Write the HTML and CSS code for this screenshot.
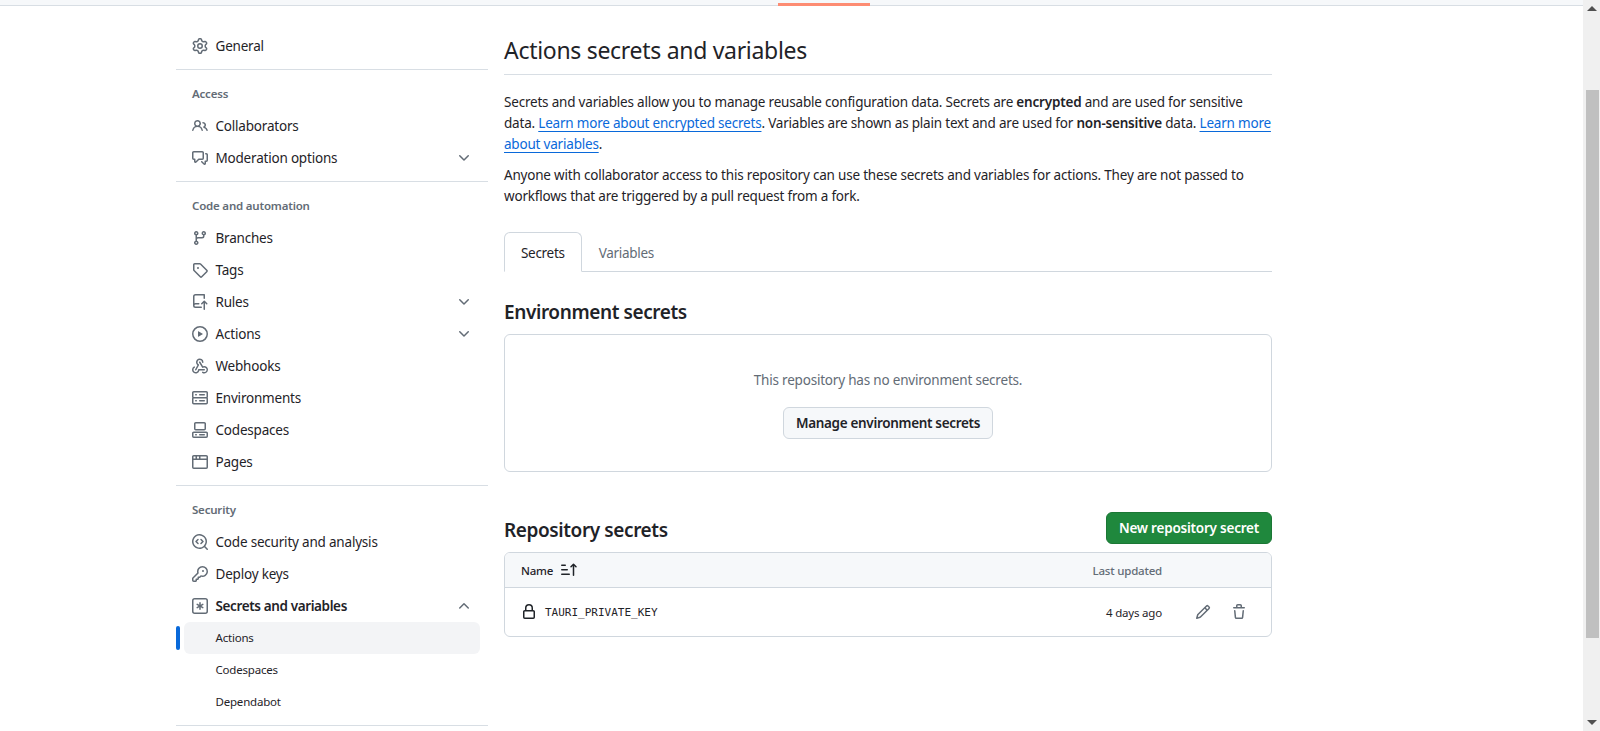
FILE: index.html
```html
<!DOCTYPE html>
<html lang="en">
<head>
<meta charset="utf-8">
<title>Actions secrets and variables</title>
<link rel="stylesheet" href="styles.css">
</head>
<body>
<div class="window">
  <div class="page">
    <div class="topbar"><span class="progress"></span></div>
    <div class="layout">
      <nav class="sidebar">
        <a class="item"><svg class="ic" viewBox="0 0 16 16"><path d="M8 0a8.2 8.2 0 0 1 .701.031C9.444.095 9.99.645 10.16 1.29l.288 1.107c.018.066.079.158.212.224.231.114.454.243.668.386.123.082.233.09.299.071l1.103-.303c.644-.176 1.392.021 1.82.63.27.385.506.792.704 1.218.315.675.111 1.422-.364 1.891l-.814.806c-.049.048-.098.147-.088.294.016.257.016.515 0 .772-.01.147.038.246.088.294l.814.806c.475.469.679 1.216.364 1.891a7.977 7.977 0 0 1-.704 1.217c-.428.61-1.176.807-1.82.63l-1.102-.302c-.067-.019-.177-.011-.3.071a5.909 5.909 0 0 1-.668.386c-.133.066-.194.158-.211.224l-.29 1.106c-.168.646-.715 1.196-1.458 1.26a8.006 8.006 0 0 1-1.402 0c-.743-.064-1.289-.614-1.458-1.26l-.289-1.106c-.018-.066-.079-.158-.212-.224a5.738 5.738 0 0 1-.668-.386c-.123-.082-.233-.09-.299-.071l-1.103.303c-.644.176-1.392-.021-1.82-.63a8.12 8.12 0 0 1-.704-1.218c-.315-.675-.111-1.422.363-1.891l.815-.806c.05-.048.098-.147.088-.294a6.214 6.214 0 0 1 0-.772c.01-.147-.038-.246-.088-.294l-.815-.806C.635 6.045.431 5.298.746 4.623a7.92 7.92 0 0 1 .704-1.217c.428-.61 1.176-.807 1.82-.63l1.102.302c.067.019.177.011.3-.071.214-.143.437-.272.668-.386.133-.066.194-.158.211-.224l.29-1.106C6.009.645 6.556.095 7.299.03 7.53.01 7.764 0 8 0Zm-.571 1.525c-.036.003-.108.036-.137.146l-.289 1.105c-.147.561-.549.967-.998 1.189-.173.086-.34.183-.5.29-.417.278-.97.423-1.529.27l-1.103-.303c-.109-.03-.175.016-.195.045-.22.312-.412.644-.573.99-.014.031-.021.11.059.19l.815.806c.411.406.562.957.53 1.456a4.709 4.709 0 0 0 0 .582c.032.499-.119 1.05-.53 1.456l-.815.806c-.081.08-.073.159-.059.19.162.346.353.677.573.989.02.03.085.076.195.046l1.102-.303c.56-.153 1.113-.008 1.53.27.161.107.328.204.501.29.447.222.85.629.997 1.189l.289 1.105c.029.109.101.143.137.146a6.6 6.6 0 0 0 1.142 0c.036-.003.108-.036.137-.146l.289-1.105c.147-.561.549-.967.998-1.189.173-.086.34-.183.5-.29.417-.278.97-.423 1.529-.27l1.103.303c.109.029.175-.016.195-.045.22-.313.411-.644.573-.99.014-.031.021-.11-.059-.19l-.815-.806c-.411-.406-.562-.957-.53-1.456a4.709 4.709 0 0 0 0-.582c-.032-.499.119-1.05.53-1.456l.815-.806c.081-.08.073-.159.059-.19a6.464 6.464 0 0 0-.573-.989c-.02-.03-.085-.076-.195-.046l-1.102.303c-.56.153-1.113.008-1.53-.27a4.44 4.44 0 0 0-.501-.29c-.447-.222-.85-.629-.997-1.189l-.289-1.105c-.029-.11-.101-.143-.137-.146a6.6 6.6 0 0 0-1.142 0ZM11 8a3 3 0 1 1-6 0 3 3 0 0 1 6 0ZM9.5 8a1.5 1.5 0 1 0-3.001.001A1.5 1.5 0 0 0 9.5 8Z"/></svg>General</a>

        <div class="group">
          <h3 class="group-title">Access</h3>
          <a class="item"><svg class="ic" viewBox="0 0 16 16"><path d="M2 5.5a3.5 3.5 0 1 1 5.898 2.549 5.508 5.508 0 0 1 3.034 4.084.75.75 0 1 1-1.482.235 4 4 0 0 0-7.9 0 .75.75 0 0 1-1.482-.236A5.507 5.507 0 0 1 3.102 8.05 3.493 3.493 0 0 1 2 5.5ZM11 4a3.001 3.001 0 0 1 2.22 5.018 5.01 5.01 0 0 1 2.56 3.012.749.749 0 0 1-.885.954.752.752 0 0 1-.549-.514 3.507 3.507 0 0 0-2.522-2.372.75.75 0 0 1-.574-.73v-.352a.75.75 0 0 1 .416-.672A1.5 1.5 0 0 0 11 5.5.75.75 0 0 1 11 4Zm-5.5-.5a2 2 0 1 0-.001 3.999A2 2 0 0 0 5.5 3.5Z"/></svg>Collaborators</a>
          <a class="item"><svg class="ic" viewBox="0 0 16 16"><path d="M1.75 1h8.5c.966 0 1.75.784 1.75 1.75v5.5A1.75 1.75 0 0 1 10.25 10H7.061l-2.574 2.573A1.458 1.458 0 0 1 2 11.543V10h-.25A1.75 1.75 0 0 1 0 8.25v-5.5C0 1.784.784 1 1.75 1ZM1.5 2.75v5.5c0 .138.112.25.25.25h1a.75.75 0 0 1 .75.75v2.19l2.72-2.72a.749.749 0 0 1 .53-.22h3.5a.25.25 0 0 0 .25-.25v-5.5a.25.25 0 0 0-.25-.25h-8.5a.25.25 0 0 0-.25.25Zm13 2a.25.25 0 0 0-.25-.25h-.5a.75.75 0 0 1 0-1.5h.5c.966 0 1.75.784 1.75 1.75v5.5A1.75 1.75 0 0 1 14.25 12H14v1.543a1.458 1.458 0 0 1-2.487 1.03L9.22 12.28a.749.749 0 0 1 .326-1.275.749.749 0 0 1 .734.215l2.22 2.22v-2.19a.75.75 0 0 1 .75-.75h1a.25.25 0 0 0 .25-.25Z"/></svg>Moderation options<svg class="chev" viewBox="0 0 16 16"><path d="M12.78 5.22a.749.749 0 0 1 0 1.06l-4.25 4.25a.749.749 0 0 1-1.06 0L3.22 6.28a.749.749 0 1 1 1.06-1.06L8 8.939l3.72-3.719a.749.749 0 0 1 1.06 0Z"/></svg></a>
        </div>

        <div class="group">
          <h3 class="group-title">Code and automation</h3>
          <a class="item"><svg class="ic" viewBox="0 0 16 16"><path d="M9.5 3.25a2.25 2.25 0 1 1 3 2.122V6A2.5 2.5 0 0 1 10 8.5H6a1 1 0 0 0-1 1v1.128a2.251 2.251 0 1 1-1.5 0V5.372a2.25 2.25 0 1 1 1.5 0v1.836A2.493 2.493 0 0 1 6 7h4a1 1 0 0 0 1-1v-.628A2.25 2.25 0 0 1 9.5 3.25Zm-6 0a.75.75 0 1 0 1.5 0 .75.75 0 0 0-1.5 0Zm8.25-.75a.75.75 0 1 0 0 1.5.75.75 0 0 0 0-1.5ZM4.25 12a.75.75 0 1 0 0 1.5.75.75 0 0 0 0-1.5Z"/></svg>Branches</a>
          <a class="item"><svg class="ic" viewBox="0 0 16 16"><path d="M1 7.775V2.75C1 1.784 1.784 1 2.75 1h5.025c.464 0 .91.184 1.238.513l6.25 6.25a1.75 1.75 0 0 1 0 2.474l-5.026 5.026a1.75 1.75 0 0 1-2.474 0l-6.25-6.25A1.752 1.752 0 0 1 1 7.775Zm1.5 0c0 .066.026.13.073.177l6.25 6.25a.25.25 0 0 0 .354 0l5.025-5.025a.25.25 0 0 0 0-.354l-6.25-6.25a.25.25 0 0 0-.177-.073H2.75a.25.25 0 0 0-.25.25ZM6 5a1 1 0 1 1 0 2 1 1 0 0 1 0-2Z"/></svg>Tags</a>
          <a class="item"><svg class="ic" viewBox="0 0 16 16"><path d="M1 2.5A2.5 2.5 0 0 1 3.5 0h8.75a.75.75 0 0 1 .75.75v3.5a.75.75 0 0 1-1.5 0V1.5h-8a1 1 0 0 0-1 1v6.708A2.493 2.493 0 0 1 3.5 9h3.25a.75.75 0 0 1 0 1.5H3.5a1 1 0 0 0 0 2h5.75a.75.75 0 0 1 0 1.5H3.5A2.5 2.5 0 0 1 1 11.5Zm13.23 7.79h-.001l-1.224-1.224v6.184a.75.75 0 0 1-1.5 0V9.066L10.28 10.29a.75.75 0 0 1-1.06-1.061l2.505-2.504a.75.75 0 0 1 1.06 0L15.29 9.23a.751.751 0 0 1-.018 1.042.751.751 0 0 1-1.042.018Z"/></svg>Rules<svg class="chev" viewBox="0 0 16 16"><path d="M12.78 5.22a.749.749 0 0 1 0 1.06l-4.25 4.25a.749.749 0 0 1-1.06 0L3.22 6.28a.749.749 0 1 1 1.06-1.06L8 8.939l3.72-3.719a.749.749 0 0 1 1.06 0Z"/></svg></a>
          <a class="item"><svg class="ic" viewBox="0 0 16 16"><path d="M8 0a8 8 0 1 1 0 16A8 8 0 0 1 8 0ZM1.5 8a6.5 6.5 0 1 0 13 0 6.5 6.5 0 0 0-13 0Zm4.879-2.773 4.264 2.559a.25.25 0 0 1 0 .428l-4.264 2.559A.25.25 0 0 1 6 10.559V5.442a.25.25 0 0 1 .379-.215Z"/></svg>Actions<svg class="chev" viewBox="0 0 16 16"><path d="M12.78 5.22a.749.749 0 0 1 0 1.06l-4.25 4.25a.749.749 0 0 1-1.06 0L3.22 6.28a.749.749 0 1 1 1.06-1.06L8 8.939l3.72-3.719a.749.749 0 0 1 1.06 0Z"/></svg></a>
          <a class="item"><svg class="ic" viewBox="0 0 16 16"><path d="M5.5 4.25a2.25 2.25 0 0 1 4.5 0 .75.75 0 0 0 1.5 0 3.75 3.75 0 1 0-6.14 2.889l-2.272 4.258a.75.75 0 0 0 1.324.706L7 7.25a.75.75 0 0 0-.309-1.015A2.25 2.25 0 0 1 5.5 4.25Z"/><path d="M7.364 3.607a.75.75 0 0 1 1.03.257l2.608 4.349a3.75 3.75 0 1 1-.628 6.785.75.75 0 0 1 .752-1.299 2.25 2.25 0 1 0-.033-3.88.75.75 0 0 1-1.03-.256L7.107 4.636a.75.75 0 0 1 .257-1.03Z"/><path d="M2.9 8.776A.75.75 0 0 1 2.625 9.8 2.25 2.25 0 1 0 6 11.75a.75.75 0 0 1 .75-.751h5.5a.75.75 0 0 1 0 1.5H7.425a3.751 3.751 0 1 1-5.55-3.998.75.75 0 0 1 1.024.274Z"/></svg>Webhooks</a>
          <a class="item"><svg class="ic" viewBox="0 0 16 16"><path d="M1.75 1h12.5c.966 0 1.75.784 1.75 1.75v4c0 .372-.116.717-.314 1 .198.283.314.628.314 1v4a1.75 1.75 0 0 1-1.75 1.75H1.75A1.75 1.75 0 0 1 0 12.75v-4c0-.358.109-.707.314-1a1.739 1.739 0 0 1-.314-1v-4C0 1.784.784 1 1.75 1ZM1.5 2.75v4c0 .138.112.25.25.25h12.5a.25.25 0 0 0 .25-.25v-4a.25.25 0 0 0-.25-.25H1.75a.25.25 0 0 0-.25.25Zm.25 5.75a.25.25 0 0 0-.25.25v4c0 .138.112.25.25.25h12.5a.25.25 0 0 0 .25-.25v-4a.25.25 0 0 0-.25-.25ZM7 4.75A.75.75 0 0 1 7.75 4h4.5a.75.75 0 0 1 0 1.5h-4.5A.75.75 0 0 1 7 4.75ZM7.75 10h4.5a.75.75 0 0 1 0 1.5h-4.5a.75.75 0 0 1 0-1.5ZM3 4.75A.75.75 0 0 1 3.75 4h.5a.75.75 0 0 1 0 1.5h-.5A.75.75 0 0 1 3 4.75ZM3.75 10h.5a.75.75 0 0 1 0 1.5h-.5a.75.75 0 0 1 0-1.5Z"/></svg>Environments</a>
          <a class="item"><svg class="ic" viewBox="0 0 16 16"><path d="M0 11.25c0-.966.784-1.75 1.75-1.75h12.5c.966 0 1.75.784 1.75 1.75v3A1.75 1.75 0 0 1 14.25 16H1.75A1.75 1.75 0 0 1 0 14.25Zm2-9.5C2 .784 2.784 0 3.75 0h8.5C13.216 0 14 .784 14 1.75v5a1.75 1.75 0 0 1-1.75 1.75h-8.5A1.75 1.75 0 0 1 2 6.75Zm1.75-.25a.25.25 0 0 0-.25.25v5c0 .138.112.25.25.25h8.5a.25.25 0 0 0 .25-.25v-5a.25.25 0 0 0-.25-.25Zm-2 9.5a.25.25 0 0 0-.25.25v3c0 .138.112.25.25.25h12.5a.25.25 0 0 0 .25-.25v-3a.25.25 0 0 0-.25-.25Z"/><path d="M7 12.75a.75.75 0 0 1 .75-.75h4.5a.75.75 0 0 1 0 1.5h-4.5a.75.75 0 0 1-.75-.75Zm-4 0a.75.75 0 0 1 .75-.75h.5a.75.75 0 0 1 0 1.5h-.5a.75.75 0 0 1-.75-.75Z"/></svg>Codespaces</a>
          <a class="item"><svg class="ic" viewBox="0 0 16 16"><path d="M0 2.75C0 1.784.784 1 1.75 1h12.5c.966 0 1.75.784 1.75 1.75v10.5A1.75 1.75 0 0 1 14.25 15H1.75A1.75 1.75 0 0 1 0 13.25ZM14.5 6h-13v7.25c0 .138.112.25.25.25h12.5a.25.25 0 0 0 .25-.25Zm-6-3.5v2h6V2.75a.25.25 0 0 0-.25-.25ZM5 2.5v2h2v-2Zm-3.25 0a.25.25 0 0 0-.25.25V4.5h2v-2Z"/></svg>Pages</a>
        </div>

        <div class="group">
          <h3 class="group-title">Security</h3>
          <a class="item"><svg class="ic" viewBox="0 0 16 16"><path d="M8.47 4.97a.75.75 0 0 0 0 1.06L9.94 7.5 8.47 8.97a.75.75 0 1 0 1.06 1.06l2-2a.75.75 0 0 0 0-1.06l-2-2a.75.75 0 0 0-1.06 0ZM6.53 6.03a.75.75 0 0 0-1.06-1.06l-2 2a.75.75 0 0 0 0 1.06l2 2a.75.75 0 1 0 1.06-1.06L5.06 7.5l1.47-1.47Z"/><path d="M12.246 13.307a7.501 7.501 0 1 1 1.06-1.06l2.474 2.473a.749.749 0 0 1-.326 1.275.749.749 0 0 1-.734-.215ZM1.5 7.5a6.002 6.002 0 0 0 3.608 5.504 6.002 6.002 0 0 0 6.486-1.117.748.748 0 0 1 .292-.293A6 6 0 1 0 1.5 7.5Z"/></svg>Code security and analysis</a>
          <a class="item"><svg class="ic" viewBox="0 0 16 16"><path d="M10.5 0a5.499 5.499 0 1 1-1.288 10.848l-.932.932a.749.749 0 0 1-.53.22H7v.75a.749.749 0 0 1-.22.53l-.5.5a.749.749 0 0 1-.53.22H5v.75a.749.749 0 0 1-.22.53l-.5.5a.749.749 0 0 1-.53.22h-2A1.75 1.75 0 0 1 0 14.25v-2c0-.199.079-.389.22-.53l4.932-4.932A5.5 5.5 0 0 1 10.5 0Zm-4 5.5c-.001.431.069.86.205 1.269a.75.75 0 0 1-.181.768L1.5 12.56v1.69c0 .138.112.25.25.25h1.69l.06-.06v-1.19a.75.75 0 0 1 .75-.75h1.19l.06-.06v-1.19a.75.75 0 0 1 .75-.75h1.19l1.023-1.025a.75.75 0 0 1 .768-.18A4 4 0 1 0 6.5 5.5ZM11 6a1 1 0 1 1 0-2 1 1 0 0 1 0 2Z"/></svg>Deploy keys</a>
          <a class="item item-open"><svg class="ic" viewBox="0 0 16 16"><path d="M0 2.75A2.75 2.75 0 0 1 2.75 0h10.5A2.75 2.75 0 0 1 16 2.75v10.5A2.75 2.75 0 0 1 13.25 16H2.75A2.75 2.75 0 0 1 0 13.25ZM2.75 1.5c-.69 0-1.25.56-1.25 1.25v10.5c0 .69.56 1.25 1.25 1.25h10.5c.69 0 1.25-.56 1.25-1.25V2.75c0-.69-.56-1.25-1.25-1.25Z"/><path d="M8 4a.75.75 0 0 1 .75.75V6.7l1.69-.975a.75.75 0 0 1 .75 1.3L9.5 8l1.69.976a.75.75 0 0 1-.75 1.298L8.75 9.3v1.951a.75.75 0 0 1-1.5 0V9.299l-1.69.976a.75.75 0 0 1-.75-1.3L6.5 8l-1.69-.975a.75.75 0 0 1 .75-1.3l1.69.976V4.75A.75.75 0 0 1 8 4Z"/></svg>Secrets and variables<svg class="chev" viewBox="0 0 16 16"><path d="M3.22 10.53a.749.749 0 0 1 0-1.06l4.25-4.25a.749.749 0 0 1 1.06 0l4.25 4.25a.749.749 0 1 1-1.06 1.06L8 6.811 4.28 10.53a.749.749 0 0 1-1.06 0Z"/></svg></a>
          <a class="item sub active">Actions</a>
          <a class="item sub">Codespaces</a>
          <a class="item sub">Dependabot</a>
        </div>
        <div class="group group-end"></div>
      </nav>

      <main class="main">
        <h1 class="title">Actions secrets and variables</h1>
        <p class="para">Secrets and variables allow you to manage reusable configuration data. Secrets are <b>encrypted</b> and are used for sensitive data. <a class="link">Learn more about encrypted secrets</a>. Variables are shown as plain text and are used for <b>non-sensitive</b> data. <a class="link">Learn more about variables</a>.</p>
        <p class="para">Anyone with collaborator access to this repository can use these secrets and variables for actions. They are not passed to workflows that are triggered by a pull request from a fork.</p>

        <div class="tabs">
          <a class="tab tab-active">Secrets</a>
          <a class="tab">Variables</a>
        </div>

        <h2 class="section-title env-title">Environment secrets</h2>
        <div class="blank">
          <p class="blank-text">This repository has no environment secrets.</p>
          <button class="btn">Manage environment secrets</button>
        </div>

        <div class="repo-head">
          <h2 class="section-title">Repository secrets</h2>
          <button class="btn btn-primary">New repository secret</button>
        </div>
        <div class="table">
          <div class="table-head">
            <span class="name-col">Name<svg class="sort" viewBox="0 0 16 16"><path d="M0 3.25A.75.75 0 0 1 .75 2.5h3.5a.75.75 0 0 1 0 1.5H.75A.75.75 0 0 1 0 3.25Zm0 4.5A.75.75 0 0 1 .75 7h5.5a.75.75 0 0 1 0 1.5H.75A.75.75 0 0 1 0 7.75Zm0 4.5a.75.75 0 0 1 .75-.75h7.5a.75.75 0 0 1 0 1.5H.75a.75.75 0 0 1-.75-.75ZM12.5 1.5a.75.75 0 0 1 .53.22l2.5 2.5a.75.75 0 0 1-1.06 1.06l-1.22-1.22v9.19a.75.75 0 0 1-1.5 0V4.06l-1.22 1.22a.75.75 0 0 1-1.06-1.06l2.5-2.5a.75.75 0 0 1 .53-.22Z"/></svg></span>
            <span class="updated-col">Last updated</span>
          </div>
          <div class="table-row">
            <svg class="lock" viewBox="0 0 16 16"><path d="M4 4a4 4 0 0 1 8 0v2h.25c.966 0 1.75.784 1.75 1.75v5.5A1.75 1.75 0 0 1 12.25 15h-8.5A1.75 1.75 0 0 1 2 13.25v-5.5C2 6.784 2.784 6 3.75 6H4Zm6.5 2V4a2.5 2.5 0 1 0-5 0v2ZM3.75 7.5a.25.25 0 0 0-.25.25v5.5c0 .138.112.25.25.25h8.5a.25.25 0 0 0 .25-.25v-5.5a.25.25 0 0 0-.25-.25Z"/></svg>
            <code class="secret-name">TAURI_PRIVATE_KEY</code>
            <span class="ago">4 days ago</span>
            <span class="actions">
              <svg class="act" viewBox="0 0 16 16"><path d="M11.013 1.427a1.75 1.75 0 0 1 2.474 0l1.086 1.086a1.75 1.75 0 0 1 0 2.474l-8.61 8.61c-.21.21-.47.364-.756.445l-3.251.93a.75.75 0 0 1-.927-.928l.929-3.25c.081-.286.235-.547.445-.758l8.61-8.61Zm.176 4.823L9.75 4.81l-6.286 6.287a.253.253 0 0 0-.064.108l-.558 1.953 1.953-.558a.253.253 0 0 0 .108-.064Zm1.238-3.763a.25.25 0 0 0-.354 0L10.811 3.75l1.439 1.44 1.263-1.263a.25.25 0 0 0 0-.354Z"/></svg>
              <svg class="act" viewBox="0 0 16 16"><path d="M11 1.75V3h2.25a.75.75 0 0 1 0 1.5H2.75a.75.75 0 0 1 0-1.5H5V1.75C5 .784 5.784 0 6.75 0h2.5C10.216 0 11 .784 11 1.75ZM4.496 6.675l.66 6.6a.25.25 0 0 0 .249.225h5.19a.25.25 0 0 0 .249-.225l.66-6.6a.75.75 0 0 1 1.492.149l-.66 6.6A1.748 1.748 0 0 1 10.595 15h-5.19a1.75 1.75 0 0 1-1.741-1.575l-.66-6.6a.75.75 0 1 1 1.492-.15ZM6.5 1.75V3h3V1.75a.25.25 0 0 0-.25-.25h-2.5a.25.25 0 0 0-.25.25Z"/></svg>
            </span>
          </div>
        </div>
      </main>
    </div>
  </div>
  <div class="scrollbar">
    <span class="arrow arrow-up"></span>
    <span class="thumb"></span>
    <span class="arrow arrow-down"></span>
  </div>
</div>
</body>
</html>
```
FILE: styles.css
```css
* { box-sizing: border-box; }
html, body { margin: 0; height: 100%; overflow: hidden; background: #fff; }
body { font-family: "Noto Sans", "Open Sans", sans-serif; font-size: 13.5px; color: #1f2328; letter-spacing: -0.2px; }
.window { display: flex; height: 731px; }
.page { flex: 1; min-width: 0; overflow: hidden; }
.topbar { height: 6px; background: #f6f8fa; border-bottom: 1px solid #d8dee4; display: flex; padding-left: 778px; }
.progress { width: 92px; height: 3px; margin-top: 3px; background: #fd8c73; }
.layout { display: flex; gap: 16px; padding: 24px 0 0 176px; }
.sidebar { width: 312px; flex: none; }
.item { display: flex; align-items: center; height: 32px; margin: 0 8px; padding: 0 8px 1px; border-radius: 6px; color: #1f2328; }
.ic { width: 16px; height: 16px; fill: #636c76; margin: 1px 7.5px 0 0; flex: none; }
.chev { width: 16px; height: 16px; fill: #636c76; margin: 1px 0 0 auto; }
.group { margin-top: 7px; border-top: 1px solid #d8dee4; }
.group-title { margin: 0; padding: 15px 16px 7px; font-size: 11.5px; line-height: 18px; font-weight: 600; color: #636c76; }
.item-open { font-weight: 600; letter-spacing: -0.38px; }
.sub { font-size: 11.5px; padding-left: 31.5px; position: relative; }
.active { background: #f3f4f6; }
.active::before { content: ""; position: absolute; left: -8px; top: 4px; width: 4px; height: 24px; border-radius: 6px; background: #0969da; }
.main { width: 768px; flex: none; margin-top: -30px; padding-top: 30px; }
.title { margin: 0; height: 45px; font-size: 23px; letter-spacing: -0.3px; line-height: 40px; font-weight: 400; border-bottom: 1px solid #d8dee4; }
.para { margin: 0 0 10px; line-height: 21px; }
.title + .para { margin-top: 17px; }
.link { color: #0969da; text-decoration: underline; text-underline-offset: 3px; }
b { font-weight: 600; }
.tabs { display: flex; margin-top: 25px; height: 40px; border-bottom: 1px solid #d0d7de; letter-spacing: -0.3px; }
.tab { padding: 0 16px; line-height: 41px; height: 40px; border: 1px solid transparent; color: #636c76; }
.tab-active { height: 40px; border: 1px solid #d0d7de; border-bottom-color: #fff; border-radius: 6px 6px 0 0; color: #1f2328; background: #fff; }
.section-title { margin: 0; font-size: 19px; letter-spacing: -0.4px; line-height: 30px; font-weight: 600; }
.env-title { margin-top: 25px; }
.blank { margin-top: 7px; height: 138px; border: 1px solid #d0d7de; border-radius: 6px; display: flex; flex-direction: column; align-items: center; padding-top: 35px; }
.blank-text { margin: 0; line-height: 21px; color: #636c76; }
.btn { font: inherit; letter-spacing: -0.32px; font-weight: 600; height: 32px; padding: 0 12px; border: 1px solid #d0d7de; border-radius: 6px; background: #f6f8fa; color: #1f2328; }
.blank .btn { margin-top: 16px; }
.repo-head { display: flex; align-items: center; justify-content: space-between; margin-top: 40px; }
.repo-head .section-title { padding-top: 4px; height: 32px; line-height: 28px; }
.btn-primary { background: #1f883d; border-color: #1b7735; color: #fff; letter-spacing: -0.22px; }
.table { margin-top: 8px; border: 1px solid #d0d7de; border-radius: 6px; overflow: hidden; }
.table-head { display: flex; align-items: center; justify-content: space-between; height: 35px; padding: 0 109px 0 16px; background: #f6f8fa; border-bottom: 1px solid #d0d7de; font-size: 11.5px; }
.name-col { display: flex; align-items: center; font-weight: 500; }
.sort { width: 16px; height: 16px; fill: #1f2328; margin-left: 8px; }
.updated-col { color: #636c76; font-weight: 500; }
.table-row { display: flex; align-items: center; height: 48px; padding-left: 16px; font-size: 11.5px; }
.lock { width: 16px; height: 16px; fill: #1f2328; }
.secret-name { font-family: "DejaVu Sans Mono", monospace; font-size: 11px; letter-spacing: 0; margin: 1px 0 0 8px; }
.ago { margin-left: auto; margin-right: 33px; }
.actions { display: flex; gap: 20px; margin-right: 24px; }
.act { width: 16px; height: 16px; fill: #636c76; }
.scrollbar { width: 17px; flex: none; height: 731px; background: #f0f0f0; display: flex; flex-direction: column; align-items: center; justify-content: space-between; padding: 6px 0 6px; }
.thumb { width: 13px; height: 548px; background: #c0c0c0; margin: 0 0 3px 1px; }
.arrow { width: 0; height: 0; border-left: 5px solid transparent; border-right: 5px solid transparent; margin-left: 1px; }
.arrow-up { border-bottom: 5px solid #505050; }
.arrow-down { border-top: 5px solid #505050; }
```
